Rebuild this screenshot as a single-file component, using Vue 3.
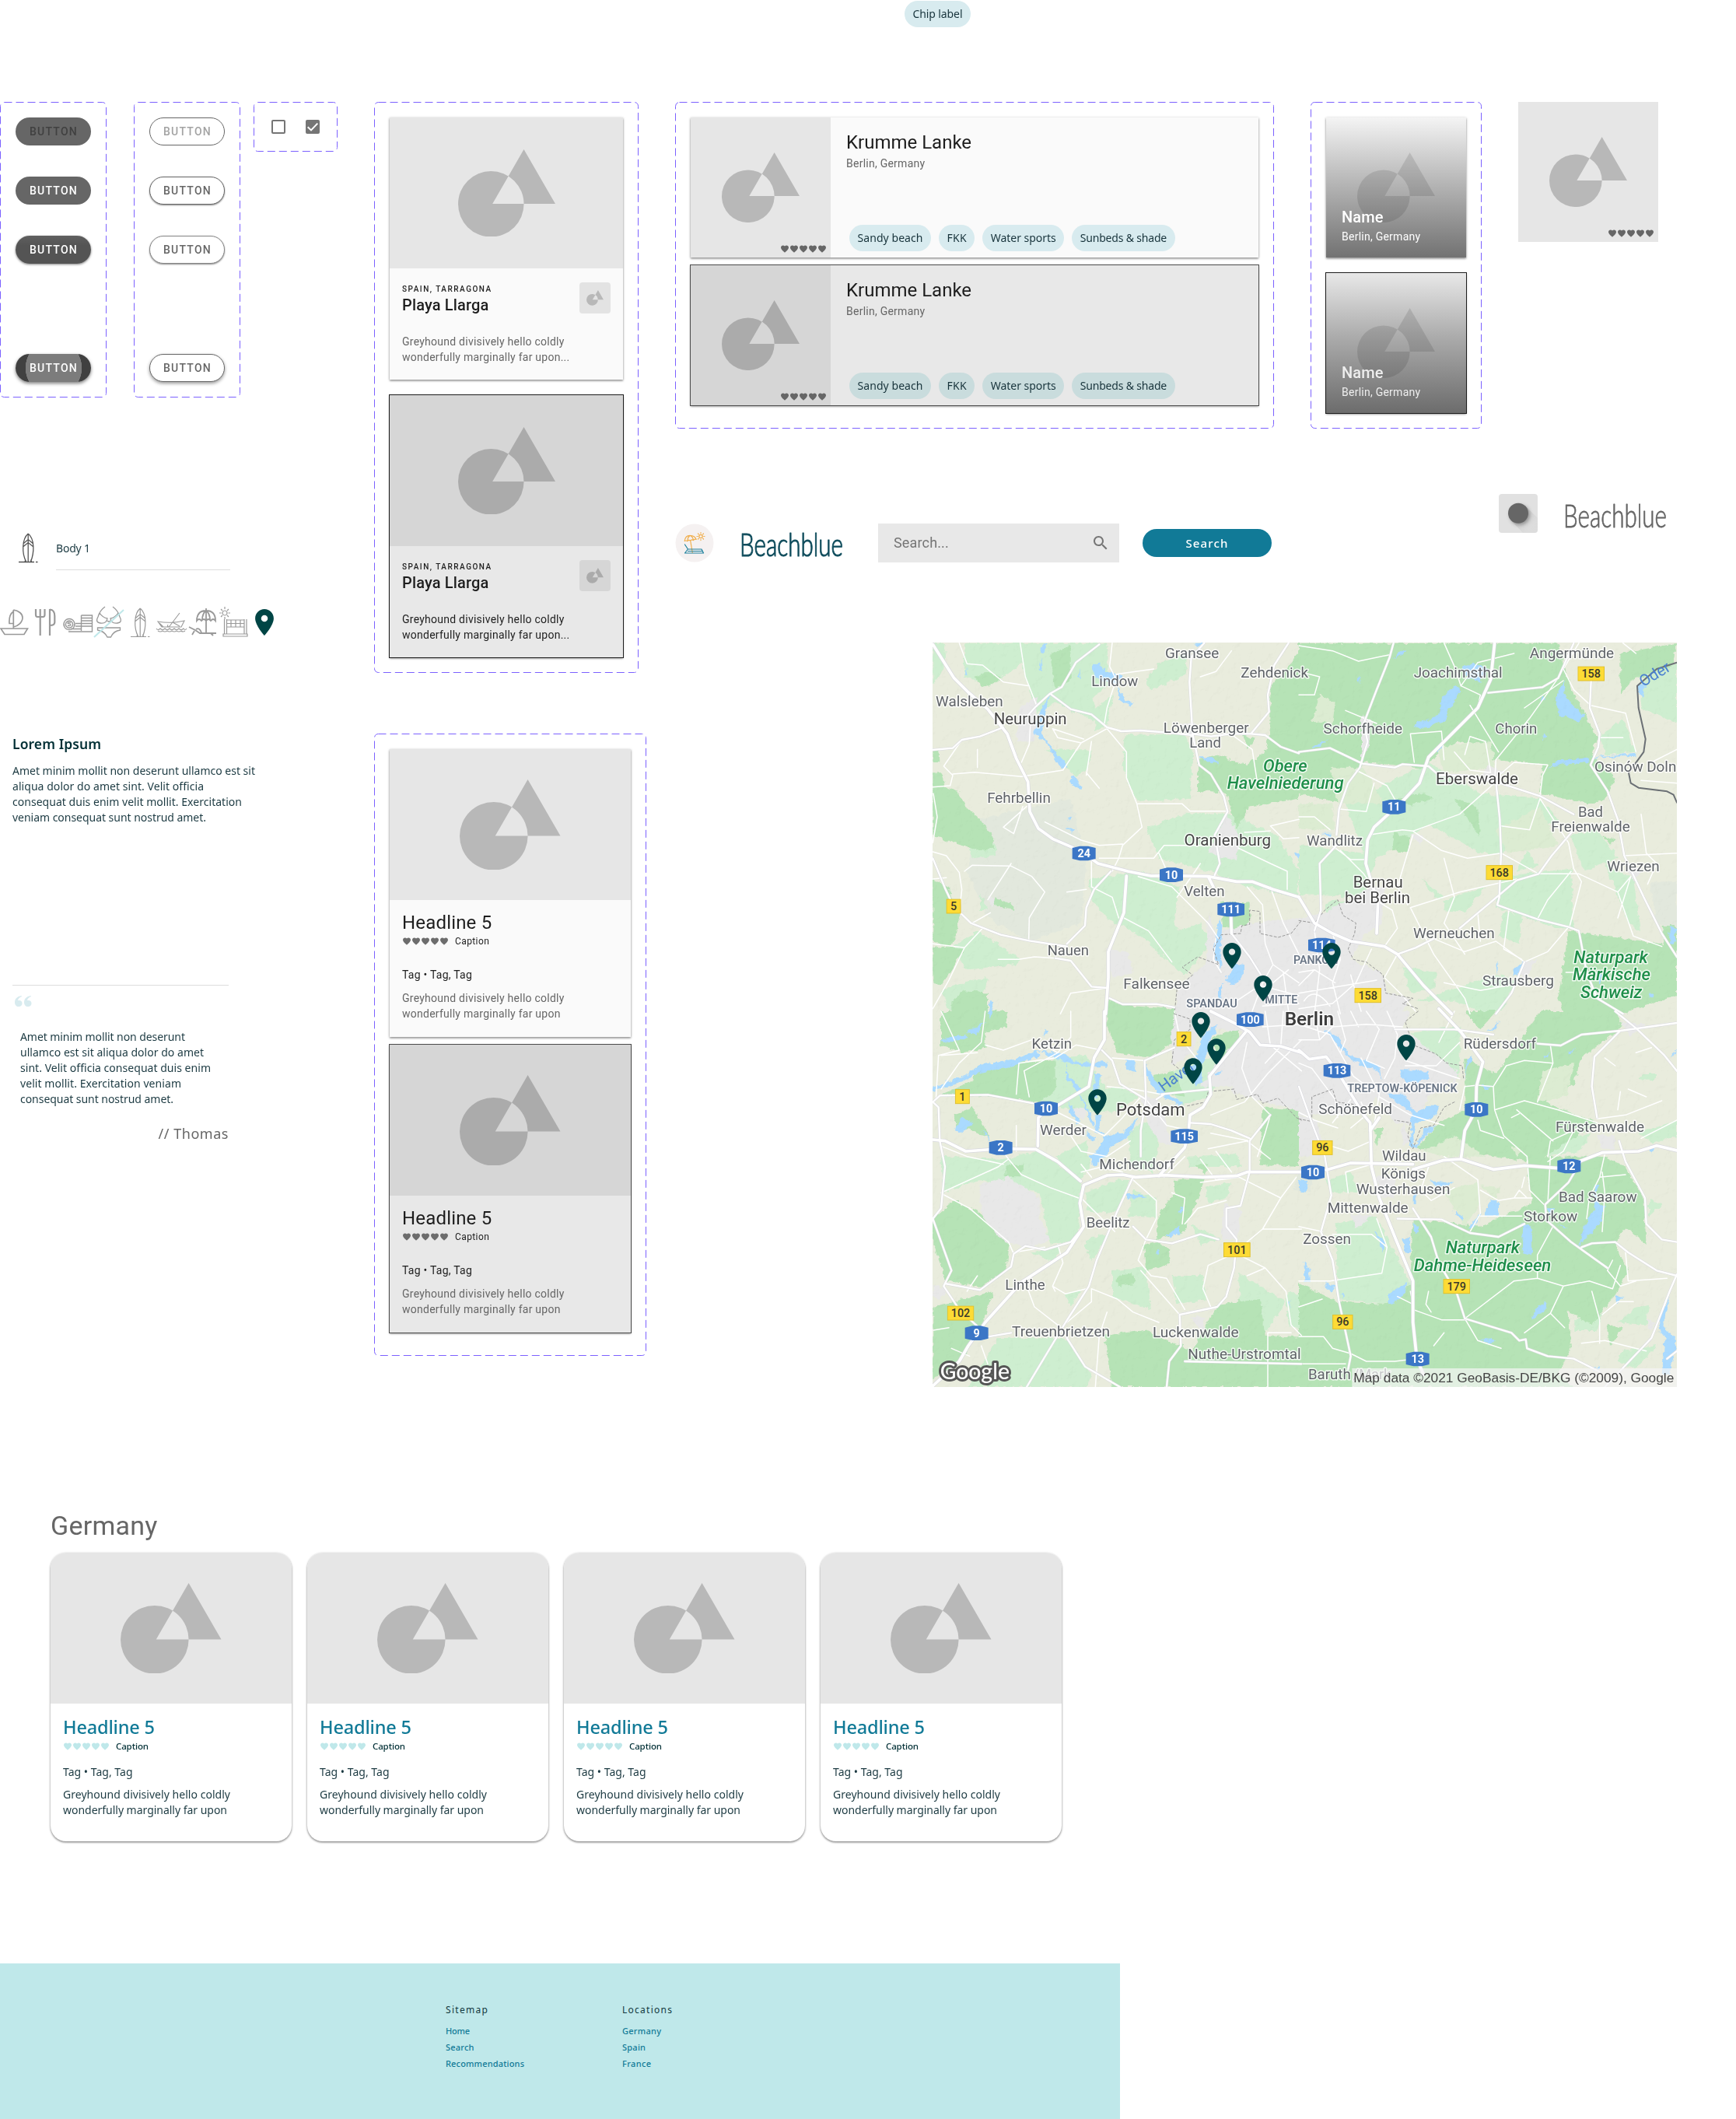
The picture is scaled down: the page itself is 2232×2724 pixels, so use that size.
<script setup>
import { h } from 'vue'

/* Spreads a single line of text over a given width through its tracking. */
const vFit = {
  mounted(el, { value }) {
    const natural = el.getBoundingClientRect().width
    el.style.letterSpacing = ((value - natural) / (el.textContent.length - 1)).toFixed(3) + 'px'
  },
}

const Shapes = () =>
  h('svg', { viewBox: '0 0 125.4 113', 'aria-hidden': 'true' }, [
    h('path', {
      'fill-rule': 'evenodd',
      d: 'M42.4 28.1a42.4 42.4 0 1 1 0 84.8a42.4 42.4 0 1 1 0-84.8zM84.8 0L125.4 70.3H44.3z',
    }),
  ])

const heart = 'M12 21.35l-1.45-1.32C5.4 15.36 2 12.28 2 8.5 2 5.42 4.42 3 7.5 3c1.74 0 3.41.81 4.5 2.09C13.09 3.81 14.76 3 16.5 3 19.58 3 22 5.42 22 8.5c0 3.78-3.4 6.86-8.55 11.54L12 21.35z'
const Hearts = () =>
  h('span', { class: 'hearts' }, [1, 2, 3, 4, 5].map(() => h('svg', { viewBox: '0 0 24 24' }, [h('path', { d: heart })])))

const Frame = () =>
  h('svg', { class: 'dash' }, [h('rect', { x: '.5', y: '.5', rx: 5, class: 'dash-line' })])

const pin = 'M12 2C8.13 2 5 5.13 5 9c0 5.25 7 13 7 13s7-7.75 7-13c0-3.87-3.13-7-7-7zm0 9.5a2.5 2.5 0 1 1 0-5 2.5 2.5 0 0 1 0 5z'

const solid = ['off', '', 'hover', 'pressed']
const outline = ['off', 'low', 'low light', 'high']
const chips = [['Sandy beach', 84], ['FKK', 25], ['Water sports', 84], ['Sunbeds & shade', 111.5]]
const lorem = [
  ['Amet minim mollit non deserunt ullamco est sit', 312],
  ['aliqua dolor do amet sint. Velit officia', 246],
  ['consequat duis enim velit mollit. Exercitation', 295],
  ['veniam consequat sunt nostrud amet.', 249],
]
const quote = [
  ['Amet minim mollit non deserunt', 212],
  ['ullamco est sit aliqua dolor do amet', 236],
  ['sint. Velit officia consequat duis enim', 245],
  ['velit mollit. Exercitation veniam', 207],
  ['consequat sunt nostrud amet.', 197],
]
const footer = [
  { title: ['Sitemap', 54], links: [['Home', 31], ['Search', 36.5], ['Recommendations', 101]] },
  { title: ['Locations', 64], links: [['Germany', 50], ['Spain', 30], ['France', 37]] },
]

const surf = 'M12.2 2C4 9 4 27 9.5 38M12.2 2C21 9 20 27 15.5 38M12.2 2V38M5.8 15L12.2 9.5 18.8 15M5.5 19L12.2 13.5 19 19M0 38.5H20M22 38.5H24.5M9 35.5L8 38M15.5 35.5L16.5 38'
const icons = [
  { w: 36, gap: 9, s: 1.7, d: 'M1 28H35.5L31 35.5H6Z M17.3 4V28M17.3 4C24 5 29 9 29 14C29 20 23 25 17.3 26M17.3 6C13 9 11.5 15 12 21.5H17.3' },
  { w: 26, gap: 11, s: 2.2, d: 'M1 3V10Q1 13 3 13H10.5Q12.5 13 12.5 10V3M6.7 3V37M19 3V37M19 3.5Q25.3 4 25.3 12V20Q25.3 24 19 24' },
  { w: 37, gap: 2, s: 1.4, d: 'M7 15.5a7 7 0 1 0 .01 0M7 18a4.6 4.6 0 1 0 .01 0M9 20.5Q5 19 5.2 21.4Q9 22 8.8 23.5Q8 25.3 5 24M22.5 11H36.5V32H6M22.5 11V31M22.5 14.5H36.5M22.5 18H36.5M22.5 21.5H36.5M22.5 25H36.5M22.5 28.5H9M15 21.5H22.5M15 25H22.5' },
  { w: 39, gap: 8, s: 1.3, d: 'M14 0Q7 5 5 13Q1 20 8 21Q16 22 17 15Q11 14 7 8M17 18Q19 20 21 18M24 0Q31 5 33 13Q37 20 30 21Q22 22 21 15Q27 14 31 8M4.5 27H33.5V30Q25 31 21.5 39H17Q13 31 4.5 30Z', slash: 'M0 39L38 4' },
  { w: 25, gap: 8, s: 1.2, d: surf },
  { w: 39, gap: 3, s: 1.1, d: 'M2 19Q19 22 36 18L32 26H7ZM4 21L9 26M30 8L17 25M17 25Q13 27 15 23M21 20L30 25M0 28Q2 31 5 28Q8 31 11 28Q14 31 17 28Q20 31 23 28Q26 31 29 28Q32 31 35 28Q37 31 39 28M2 31Q5 33 8 31Q11 33 14 31Q17 33 20 31Q23 33 26 31Q29 33 32 31Q34 33 37 31' },
  { w: 35, gap: 4, s: 1.8, d: 'M10 18C10 9 15 5 22 5C29 5 34 9 34 18Q31 14 28 18Q25 14 22 18Q19 14 16 18Q13 14 10 18ZM22 2V34M17 17Q17 9 22 5Q27 9 27 17M0 26L8 30L14 34H35M7 31L4 36M28 34L31 37M9 29Q13 26 16 33' },
  { w: 36, gap: 10, s: 1.2, d: 'M7 5a3 3 0 1 0 .01 0M7 0V3M7 13V16M0 8H2.5M11.5 8H14M2 3L4 5M12 3L10 5M2 13L4 11M12 13L10 11M6.5 16V35M9.5 16V35M32 16V35M35 16V35M9.5 17H32M9.5 26H32M9.5 21.5H32M15 17V26M21 17V26M27 17V26M5 35H36V38H5Z' },
]

/* Regional map, split in four tiles of 1440 units; three units make one pixel. */
const tiles = ['translate(0 0)', 'translate(1440 0)', 'translate(0 1440)', 'translate(1440 1440)']
const land = {
  light: [
    'M150 20L700 20 710 180 640 230 690 340 500 250 430 290 370 100 250 180 150 150ZM770 375L1000 370 1030 440 1020 620 815 630 760 500ZM850 730L1000 680 1180 680 1350 760 1440 900 1430 1000 1240 960 1100 900 900 850ZM630 930L830 900 980 960 960 1100 1000 1170 880 1180 700 1080 640 1010ZM110 1190L200 1130 370 1240 350 1260 150 1280ZM28 20L80 20 70 120 28 180ZM900 100L1000 60 1010 140 870 200 850 160ZM450 430L640 430 630 500 580 540 500 440ZM160 800L270 790 270 840 180 850ZM660 270L720 220 700 340 650 360ZM210 980L240 1050 210 1050ZM860 1180L1060 1100 1100 1180 1000 1300ZM150 1330L240 1310 230 1360 90 1440 60 1360Z',
    'M180 640L500 480 700 600 930 620 1000 700 780 830 700 830 500 720 300 850 250 1000 0 990 0 800 250 830ZM780 920L1050 890 1060 1120 1000 1120 760 1040ZM1180 870L1290 930 1320 1130 1270 1100ZM450 1400L760 1300 840 1320 780 1440 700 1440 600 1400ZM1160 380L1250 310 1300 440 1180 450ZM1330 130L1458 100 1458 330 1320 270ZM1050 760L1150 740 1230 850 1100 900ZM100 1020L200 1010 180 1100 110 1090ZM400 1270L530 1290 520 1350 430 1370ZM560 1010L720 960 640 1060 560 1050ZM470 930L560 1000 540 1010ZM790 1060L860 1070 850 1180 770 1150ZM880 820L920 880 840 900Z',
    'M60 560L300 570 430 540 600 650 590 880 480 900 440 700 200 650 70 700ZM620 700L740 650 790 650 730 780 620 770ZM780 480L830 430 910 430 880 620 790 600ZM720 1000L850 990 870 1150 720 1100ZM950 1020H1070L1080 1110 970 1130ZM1210 1010L1390 1120 1310 1240 1210 1130ZM280 1260L540 1260 640 1400 620 1449 160 1449ZM430 350L500 180 620 170 700 300 760 290 820 330 740 390 560 380ZM900 250L1100 180 1200 100 1100 330 990 360ZM500 560L620 500 640 600 600 650ZM1080 680L1180 660 1160 720 1090 740ZM800 690L890 720 890 800 780 790ZM640 870L710 860 640 960 610 900ZM400 930L520 900 500 970ZM540 1090L600 1070 560 1140ZM1020 820L1140 880 1060 900ZM1010 560L1200 550 1220 600 1020 600ZM1390 1090L1470 1090 1470 1240 1400 1210Z',
    'M430 80L620 60 620 250 540 260ZM140 820L300 790 430 1050 330 1130 150 1110ZM0 100L60 120 50 180 0 190ZM1330 240L1380 240 1370 270 1310 260ZM1310 470L1458 420 1458 480 1370 510ZM100 650L200 620 230 700 130 700ZM1060 1190L1170 1170 1150 1230 1060 1230ZM1290 1150L1350 1130 1340 1210 1230 1200ZM1250 1310L1380 1290 1300 1380 1230 1350ZM1000 500L1130 470 1080 540 960 560ZM1350 720L1400 750 1350 790Z',
  ],
  green: [
    'M28 435L50 435 52 480 28 480ZM28 520L60 520 75 575 130 600 155 650 200 690 265 770 260 815 200 820 28 765ZM28 930L90 960 100 1045 135 1050 115 1150 90 1195 28 1170ZM28 1190L150 1200 90 1300 60 1340 28 1330ZM100 1400L150 1360 240 1370 240 1440 100 1440ZM1330 190L1440 60 1440 620 1250 650 1200 740 1160 600 1050 590 1050 470 1120 450 1240 490 1310 440 1330 330ZM1140 1020H1250V1120H1150ZM700 1395L800 1420 960 1430 960 1440 700 1440ZM190 150L240 130 300 160 220 190ZM270 1000L340 1030 340 1050 260 1030ZM1220 370L1270 390 1240 430ZM1150 1280L1210 1230 1180 1310ZM480 60L560 30 560 160 500 200Z',
    'M0 20L1000 20 1050 200 1150 380 1130 450 1220 540 1180 620 1120 640 930 600 940 490 760 470 620 400 560 430 480 500 250 480 170 640 0 600ZM1040 1130L1400 1180 1458 1200 1458 1380 1300 1430 1200 1470 1030 1470 1000 1390ZM370 750L430 770 420 830 360 820ZM310 640L470 600 520 620 400 650ZM1240 60L1458 20 1440 110 1290 160 1240 220ZM600 620L690 650 700 770ZM1400 1110H1458V1200L1410 1190ZM1170 760L1220 780 1200 800Z',
    'M700 0L960 0 960 110 870 180 740 160 700 60ZM60 0L320 0 310 60 230 80 230 140 140 160 60 130ZM200 210L500 190 500 310 440 350 170 320 60 320 180 270ZM28 800L110 730 200 770 320 890 310 1000 220 1060 80 1040 28 900ZM28 1140L260 1080 220 1200 140 1350 28 1420ZM960 650L1080 640 1000 850 890 880 900 780 960 700ZM1300 370L1440 380 1440 600 1290 590ZM690 1250L850 1230 1000 1300 1470 1350 1470 1449 720 1449ZM1130 1130L1290 1110 1310 1250 1470 1260 1470 1350 1020 1320ZM1110 100L1210 60 1220 180 1130 240ZM840 900L900 890 950 920 930 980 850 1000ZM110 400L180 370 250 490 120 440ZM860 250L960 230 1000 330 900 310ZM310 590L380 590 370 640 310 640ZM740 1020L800 1010 810 1050 740 1060ZM1040 590L1090 590 1080 630Z',
    'M450 530L540 430 640 380 640 180 760 240 930 0 1220 0 1250 60 1090 180 1060 280 950 350 1150 430 950 560 1180 560 1260 600 1330 720 1340 900 1260 830 1220 900 1270 1000 1230 1080 1130 1210 1040 1160 1050 1300 1000 1400 1060 1449 0 1449 0 1050 150 1120 330 1130 430 1050 440 800 700 830 900 740 880 580 640 540ZM640 0L760 0 700 70ZM290 450L330 450 300 520ZM1190 1210L1250 1220 1200 1290Z',
  ],
  pale: [
    '', 'M530 420L740 400 760 500 560 520ZM80 220L140 250 130 330 50 320ZM120 500L250 500 330 640 150 640ZM0 640L130 640 140 740 0 740ZM760 740L930 650 1000 800 800 830Z', '',
    'M940 230L1060 200 1030 330 920 350ZM480 540L600 480 720 560 560 560ZM560 690L690 660 700 740 640 830ZM700 670L780 680 760 730ZM820 520L860 540 840 560Z',
  ],
  urban: [
    'M1160 680L1210 760 1200 860 1090 830ZM700 1200L780 1210 800 1290 720 1310ZM1090 1060L1120 1140 1250 1100 1440 1080 1440 1440 960 1440 980 1340 1080 1260ZM360 270L430 230 420 400 350 400ZM240 990L270 1010 250 1040ZM980 330L1040 330 1030 380Z',
    'M0 1080L100 1060 280 960 330 960 320 1100 250 1150 200 1240 320 1290 340 1370 430 1390 400 1440 0 1440ZM240 300L280 320 270 420 240 480ZM430 760L480 760 470 800ZM730 490L790 520 760 560 700 540ZM860 1250L920 1240 860 1330ZM1260 880L1330 890 1290 940Z',
    'M960 0H1470V390L1300 350 1180 310 1190 290 1060 290 1100 230 1230 80 1060 60 1030 160 950 210 950 100ZM830 330L900 340 950 520 900 500 860 440ZM205 670L320 640 440 720 440 800 480 880 420 910 300 890 220 790ZM1150 740L1220 770 1200 880 1140 880ZM28 1060L80 1070 60 1110 28 1100ZM1020 1180L1080 1180 1070 1240ZM560 380L620 370 610 420Z',
    'M0 0H430L400 60 480 130 620 240 500 330 440 440 370 430 300 330 230 400 0 400ZM1150 480H1220V530H1170ZM1240 40L1340 50 1280 100ZM400 430L430 500 400 520ZM0 400L70 420 100 560 0 560ZM300 640L370 640 370 720 320 720ZM1340 1190L1380 1200 1350 1240ZM560 230L620 250 600 280ZM200 780L280 790 220 840Z',
  ],
  water: [
    'M480 215L440 290 415 370 460 395 520 500 555 500 500 440 445 365 460 300ZM640 105L670 95 700 130 760 150 740 180 650 150ZM565 530L608 575 600 590 555 555ZM740 190L770 240 800 250 795 260 755 245ZM1060 460L1110 460 1130 490 1090 480ZM1190 1250L1230 1260 1230 1290 1190 1340 1150 1320 1180 1290ZM1135 1080L1145 1110 1135 1200 1140 1280 1110 1210ZM1150 1330L1140 1390 1125 1400 1130 1350ZM250 1400L262 1420 252 1468 242 1448ZM455 25L470 20 455 60 440 50ZM445 80L450 130 440 120ZM160 110V140L152 140ZM595 120L600 160 590 150ZM545 730L572 740 562 755ZM545 690H565L555 708ZM1425 825H1440V860ZM1040 20H1070L1050 40Z',
    'M610 185L620 210 580 280 560 320 480 350 445 340 460 325 540 300 555 230 580 200ZM1020 165L1030 230 1100 300 1080 325 1000 290 990 230ZM630 110L670 95 730 120 700 170 640 150ZM960 500L1000 475 1120 462 1120 480 1000 490ZM1120 462L1300 443 1300 455 1180 460ZM830 1280L865 1248 850 1290 830 1305ZM760 1260L770 1250 765 1300ZM1430 1115H1455L1450 1175 1428 1185ZM50 420L115 390 80 420ZM1305 180L1338 170 1330 228 1305 210ZM360 75L415 45 400 65ZM225 150L235 155 235 175ZM940 225L950 240 928 250ZM945 365L955 380 942 395ZM90 755L130 755 120 770ZM535 420L560 415 530 440ZM1350 1370L1370 1375 1358 1385ZM1145 1290L1170 1300 1160 1340Z',
    'M28 290L150 250 210 205 330 190 430 150 440 170 340 210 200 240 120 280 28 310ZM430 150L530 165 600 200 700 195 700 215 600 210 500 180ZM540 190L545 240 600 300 590 320 625 390 640 440 690 470 680 480 655 460 640 400 600 330 540 250ZM655 240H675L660 340 640 340ZM655 400L675 400 670 460 655 450ZM770 190L805 185 812 235 775 225ZM850 200L900 290 930 320 990 350 985 365 900 320 850 250ZM1070 90L1125 50 1110 90 1080 170 1060 220 1070 280 1040 290 1020 240ZM820 410L790 480 740 510 720 520 690 560 650 600 632 560 670 530 690 480 760 470ZM140 410L185 430 130 470 110 455ZM550 350L590 410V440L552 380ZM620 465L655 490 645 505ZM770 705H840L845 720 775 718ZM985 755H995L985 780 970 775ZM980 825V855L940 872 932 860ZM1445 650H1470V705ZM160 80L225 38 200 90ZM60 110L150 90 165 105 70 120ZM895 918L905 918 890 940ZM1465 975V1040L1460 1000ZM1405 1110V1140L1400 1130ZM1110 240L1150 228 1120 248ZM215 455L250 490 245 500ZM460 65L470 80 455 100ZM245 0H260L250 25Z',
    'M390 225L500 230 500 260 430 275 400 260ZM340 320L410 320 450 390 500 365 545 365 520 410 450 430 440 490 450 520 490 450 530 440 480 490 450 530 425 520 435 430 430 390ZM100 70L150 100 200 170 310 210 320 270 305 230 200 190ZM725 85L775 35 760 65ZM740 725L775 740 770 790 715 790ZM1140 670H1155L1150 730 1180 760 1160 820 1080 905 1100 830 1140 760ZM865 820L900 830 900 940 860 930ZM345 1090L420 1045 400 1100 345 1130ZM290 850L330 890 325 925ZM440 820L470 830 450 860ZM400 880L430 870V930L410 930ZM20 970L40 990 45 1040 22 1040ZM105 1045L140 1060 130 1085 108 1070ZM0 650L35 665 22 700 0 690ZM500 655L600 662 540 680ZM440 680H452V750H440ZM700 1265L760 1270 740 1282ZM955 1120L945 1160 895 1190 915 1145ZM1220 1095L1252 1105 1225 1130ZM1430 1100L1405 1210 1458 1270 1430 1400H1400L1412 1260 1385 1220 1400 1150ZM650 840L700 775 680 830ZM635 265L650 185 668 178 650 210ZM590 765L640 795 630 805ZM1345 532L1378 528 1362 548ZM1070 140L1040 170 1040 160ZM970 160L950 185 948 175ZM1458 150L1435 185 1440 165ZM955 760H985L970 790ZM1000 820L1035 840 1020 840ZM160 1090H170V1110ZM1130 1380L1165 1365 1155 1385ZM700 285L740 290 720 305Z',
  ],
}
const major = [
  'M28 25L110 155 165 210 240 275 315 370 350 465 395 555 402 670 435 735 490 775 560 805 611 831 665 870 780 900 870 918 948 917 1090 920 1200 940 1260 940 1340 970 1440 1000M775 918L765 1060 705 1210 705 1310 695 1450M1178 1075L1180 1140M1090 920L1110 960',
  'M755 20L740 160 690 270 500 460 465 560 400 630 290 730 265 780 258 870 285 960 305 1020 300 1140M0 1000L60 1100 130 1140 200 1170 330 1190 380 1220 480 1340 590 1450',
  'M690 0L690 110 650 180 630 290 515 360 465 385 435 410 433 520M28 495L75 500 155 540 290 530 425 532 510 580 598 655M1450 620L1300 620 1240 620 1200 635 1070 640 920 632 810 640 760 630 700 633 610 670 595 740 610 830 545 930 370 1045 230 1200 165 1290 130 1350 28 1445M1235 80L1095 250 1100 320 1070 370 1020 400 1015 460 1000 525 900 635M1100 0L1190 45 1250 80 1290 130 1370 135 1450 160',
  'M540 -10L625 80 710 195 685 290 683 380 640 460 625 570 555 575 440 610M0 150L40 185 105 175 147 229 250 400 275 430 280 600 310 720 370 870 440 1040 440 1200 455 1340 480 1400M105 612L200 585 440 590M625 570L750 610 870 595 1000 605 1080 580 1170 545 1310 540 1380 518 1458 537M310 410L275 460',
]
const middle = [
  'M670 25L580 95 525 190 480 215 425 265 385 310M480 215L560 275 640 295 700 345 755 360 830 357 930 365 1030 375M1075 20L1025 75 1018 170 1030 370 1055 490 1100 525 1150 610 1165 670 1115 760 1135 870 1115 915M1400 20L1345 105 1320 220 1325 285 1255 370 1310 375 1370 420 1440 445M28 432L105 425 140 393 210 380 300 345M28 850L75 965 108 1035 175 1100 290 1145 400 1168 545 1190M710 1390L760 1413 890 1412 960 1425M1180 1140L1250 1230 1300 1310M545 1180L615 1110 620 1040 650 970 715 900M500 1235L560 1245 640 1345 700 1350M1030 370L1100 380 1180 370 1255 370',
  'M365 20L350 75 300 200 250 330 265 400 235 500 190 560 155 660 145 760M0 440L120 425 245 485 370 500 400 487 500 495 540 530 640 530 760 555 930 610 1060 680M1060 20L1000 155 940 190 730 212M1127 165L1122 270 1160 370 1155 420 1125 490 1190 590 1230 700 1255 840 1330 1000 1400 1140 1458 1230M760 555L775 700 780 830 773 1000 765 1030 820 1050 920 1085 1040 1115 1080 1130 1110 1290 1150 1390 1250 1450M1060 740L975 840 925 910 840 935 620 1120M380 1220L450 1195 520 1160M145 800L80 870 85 1050 60 1130M870 1250L820 1370 760 1450',
  'M28 350L55 325 240 322 415 355M28 350L50 370 55 500 75 600 60 760 28 800 100 1000 70 1060 130 1150 200 1215M680 150L720 190 750 280 850 340M960 140L845 190 850 340 830 460 830 560M800 640L740 770 660 960 630 1060 540 1200 390 1449M800 830L850 880 950 895 1060 860 1130 880M1215 750L1160 760 1160 830 1200 880 1190 990 1160 1100 1125 1140 980 1170 985 1290 940 1350 930 1449M240 1255L330 1240M545 1260L615 1370 750 1449M1000 1350L1450 1360M1330 400L1250 500 1250 620 1215 750M330 985L210 1075 75 1050M330 985L340 935 385 905 460 920 560 890 610 830M910 320L1100 300M890 340L920 320M1020 430L1100 435 1180 460 1250 490',
  'M920 125L1010 132 1090 90 1240 75 1458 45M1220 0L1300 65 1410 170 1458 230M1240 75L1140 175 1130 290 1150 410M1235 500L1260 580 1335 720 1340 820 1400 880 1458 890M1090 575L1040 660 950 745 955 800M380 800L550 803 660 855 770 870 870 820M960 810L1050 890 1190 990M1090 910L1130 895 1220 890 1270 930 1380 1000 1458 1020M440 760L510 870 540 970 610 1090 640 1185 820 1240 850 1270 875 1265 880 1300 960 1330 1060 1340 1160 1390M1458 1015L1430 1080 1380 1210 1360 1260 1180 1449M0 290L50 430 100 560 125 710 85 850 130 960 155 1120 200 1330 190 1380M370 70H600L750 90M1420 1340L1458 1310',
]
const minor = [
  'M105 525L190 518 370 535 530 510 600 405 700 350M140 393L70 495 105 530 95 570 28 575M700 350L775 440 775 540 815 640 835 730 760 800 745 850 720 900M670 850L880 850 920 800 1080 800M815 640L990 640 1020 668 1165 668M150 900L180 877 330 880 410 920 460 980 400 1080 398 1165M390 650L300 730 340 755 375 650M28 825L80 840 130 905 140 970 130 1060M365 20L385 150 430 265M28 1180L150 1195 220 1120M150 1195L90 1320 28 1430M130 20L160 100 220 105 300 170 400 185M370 480L400 410 405 320M490 350L510 385 600 405M460 710L600 780 670 800 760 795M720 20L710 110 735 160 700 270 690 330M735 140L880 120M1060 150L1120 130 1180 50M1190 380L1260 430 1280 560M30 600L45 690 28 790M640 850L640 960 720 1000 745 1080M765 1080L860 1130 950 1250M820 920L950 960 1000 1010 1090 1100 1130 1160M1440 700L1330 725 1380 775 1440 770M1205 810L1330 870 1395 900 1395 970M1240 960L1300 1030 1310 1180M1230 750L1330 745M250 1060L180 1100M700 1350L560 1370 520 1450M280 1240L360 1240 420 1230 500 1235M970 1000L1040 900 1060 870M1330 960L1380 1100 1440 1220M900 830L940 920M28 930L80 925M1310 1180L1340 1260 1300 1330 1260 1440M1290 1340L1440 1380M1340 1260L1440 1330M620 520L670 580M490 350L610 390M640 400L620 530M1120 1160L1110 1240 1140 1290M240 1010L330 870M200 430V500M545 980L620 970M1380 1290L1400 1440M1300 1420L1440 1410M1200 1400L1290 1340M1400 1280L1340 1330',
  'M625 185L600 110 560 20M625 185L700 220 690 270M625 185L690 95 830 60M780 725L890 740 930 620M930 620L1040 790 1060 890 1090 940 1045 1110M925 910L1080 910 1230 980 1290 1150 1400 1190M1230 980L1280 920M440 745L550 820 650 850 780 830 925 910M440 745L400 740 270 760M440 760L380 960 420 1030M430 1040L620 980 840 930M430 1040L520 1220 640 1390 660 1450M1000 155L890 310 760 470 755 555M0 30L130 50 230 90 350 65M560 470L550 360 430 370 445 480M600 440L660 510 740 520 720 400 660 380 640 450M1080 20L1020 120 1060 200 1125 260 1260 290 1300 440M1160 385H1250M760 555L620 680 440 745M930 610L940 530 960 490 830 480 760 540M0 690L60 690 120 740M160 820L250 910 300 980M330 1190L380 1120 360 1050 310 1020M520 1160L640 1210 760 1170 870 1250M1110 1290L1030 1290M1040 1115L960 1210 870 1250M1280 920L1230 1080M1255 840L1458 830M1320 680L1340 830 1380 870 1345 950M155 660L260 670 290 560M265 855L200 855 140 810M280 1200L220 1330 130 1410 0 1430M130 1140L160 1240 130 1330 160 1450M0 1370L300 1320M60 1280L0 1340M60 1130L80 1280 60 1450M380 1220L330 1310 400 1380 450 1440M1300 60L1250 20M690 1060L700 1170M1458 560L1320 550M1020 165L870 270M810 1050L790 1200 860 1240M1458 430L1360 480M220 510L340 570 380 640M0 130L80 150 60 220 0 220M180 280L300 330M560 850L600 1000 560 1100 640 1220M770 440L660 260M560 1330L700 1360 860 1330M1050 900L960 1010 920 1085M0 1290L60 1280 140 1330M20 1400Q60 1340 120 1420M200 1300L240 1440',
  'M60 700L280 600 320 570 290 530M320 570L370 630 480 680 590 720M600 720L730 850M850 880L820 960 870 1020 930 1030 1000 1150M640 1070L740 1110 800 1160 900 1200M1210 940L1310 990 1390 1080 1410 1210 1450 1250M1060 660L1210 640 1370 720 1300 840 1240 890M1300 840H1450M230 130L300 150 410 110M60 0L130 150 50 170 40 340M350 320L360 200 500 180 580 130 680 150M170 760L320 890 340 935M65 705L170 760M560 0L560 100 510 160 440 120M510 160L380 230 400 330M510 390L690 480M560 480L600 540 700 560 790 500M690 480L760 410 830 330M600 620L680 600 760 620M850 340L930 440 1020 460M1000 560L920 640M1090 530L1240 500 1330 570M1120 540L1180 620M910 320L800 300 700 290M1240 620L1120 650 1060 570M1370 720L1430 640M545 1200L640 1120 640 1070M500 1080L490 1060 530 970 510 900M490 1060L540 1090 620 1070M340 930L460 910M390 1060L420 1140 510 1210M200 1020L160 1080M700 1160L670 1250 655 1449M1320 1240V1449M1320 1240H1410M1310 990L1240 1020M1250 500L1100 470M840 190L720 180M60 520L160 560 300 590M350 540V440M640 640L600 590M960 0L980 100 1060 200M1330 400L1310 470 1280 560M1000 820L1050 760 1160 730M990 820L1000 720 950 700M850 880L890 800 890 730 800 650M230 0L215 120 130 200 60 300M1450 110L1320 240 1230 350 1100 400M1240 120L1220 220 1260 330 1330 400M1310 0L1330 130 1450 230M215 1290L240 1360M100 1300L170 1330M30 1230L90 1220M980 1170L830 1000M1100 1140L1070 1070 1090 980 1200 930M60 170L200 160M1300 60L1450 50M1380 0L1370 135 1310 200',
  'M750 290L755 380 790 480 880 560 890 690 945 745M755 380L870 345 1000 380 1150 430M980 200L870 190 800 210 750 290 690 285M980 200L920 350M970 130L980 200M1150 415L1260 400 1400 345M960 560L970 500 1100 440M970 560L960 740M640 1185L830 1040 920 1030 1020 1060 970 1165 870 1240M920 1030L920 940 980 830M970 1165L1025 1220M440 1150L550 1190 640 1190M0 1140L90 1110M0 1040L120 1040 320 1010 340 910 300 800M0 1255L95 1255 130 1300 200 1320 260 1350 370 1350 450 1340M0 1360L180 1360M540 120L600 0M410 190L620 260M410 210L530 210 620 120M690 420L700 460 790 490M150 410L140 340 50 220 0 200M560 560L690 650 700 780 660 850M700 690L770 730 830 720 850 690 880 720M700 790H860M900 720H830M1160 640L1260 630M1170 620L1180 700 1170 850M1180 550L1160 640 1120 720 1110 800M1020 1060L1120 1040 1210 1070 1240 980M1210 960L1190 1000 1240 1060 1300 1040M1130 1080L1160 1190 1160 1280M1170 1170L1230 1120 1290 1120M1090 1280L1180 1270 1340 1310M1260 930L1270 1040 1420 1030M0 390L60 420 150 450M200 340L130 430M240 350L260 400 200 450M290 440L310 320 240 180M0 50L120 90 210 250 290 310M150 0L180 110 160 160M260 0L310 70 260 190 330 220M340 0L380 90 370 180 330 260M0 110H80L130 60 260 50 400 60M310 330L430 400 560 440M640 290L690 285M620 380L640 290M500 600L470 690 510 730 600 680M60 500L190 540 280 500M280 590L180 620 190 700M90 850L0 830M130 860L280 860 340 910M640 1185L690 1270 780 1300M500 1080L490 1130 510 1160M520 1290L560 1240M870 640L860 680M1060 460L1020 540 960 580M1320 490L1458 420M820 410L850 395M1180 180L1220 210M1300 160L1360 140M1240 310L1230 380M1270 300L1340 330M430 1080L440 1130 380 1100M840 380L980 500M60 0L80 110M200 0L230 60',
]
const borders = [
  'M960 1450L970 1350 1030 1300 990 1270 1050 1230 1130 1260 1110 1200 1140 1145 1215 1140 1220 1110 1250 1105 1250 1050 1290 1055 1290 1140 1360 1155 1410 1140 1450 1090',
  'M0 1090L60 1100 100 1050 150 1010 170 1070 220 1100 215 1140 190 1200 210 1240 260 1250 325 1300 335 1370 440 1390 400 1410 460 1430',
  'M960 10L1020 30 1020 70 960 110 950 200 1000 240M1010 365L1080 350 1090 310 1190 300 1200 340 1280 320 1300 355 1360 335 1430 410 1450 420',
  'M460 0L410 40 440 130 530 165 570 200 630 210 635 260M600 350L560 370 520 440 470 450 440 530 420 480 430 430 370 420M0 415L50 425 50 330 130 300 145 350 220 360',
]
const labels = [
  [
    ['Gransee', 1028, 77, 208], ['Lindow', 730, 186, 180], ['Walsleben', 169, 263, 260], ['Neuruppin', 404, 334, 282, 'city'], ['Löwenberger', 1082, 366, 330], ['Land', 1079, 424, 122],
    ['Zehdenick', 1346, 152, 260], ['Obere', 1387, 516, 170, 'park'], ['Havelniederung', 1388, 583, 450, 'park'], ['Fehrbellin', 360, 635, 245], ['Oranienburg', 1165, 802, 335, 'city'],
    ['Velten', 1075, 997, 157], ['Nauen', 550, 1225, 160], ['Falkensee', 891, 1352, 256], ['SPANDAU', 1104, 1424, 196, 'quarter'], ['MITTE', 1372, 1409, 126, 'quarter'], ['PANKOW', 1507, 1258, 176, 'quarter'],
  ],
  [
    ['Joachimsthal', 614, 154, 342], ['Angermünde', 1053, 78, 325], ['Schorfheide', 247, 368, 305], ['Chorin', 838, 368, 162], ['Osinów Doln', 1298, 517, 316], ['Eberswalde', 687, 564, 318, 'city'],
    ['Bad', 1125, 690, 96], ['Freienwalde', 1125, 746, 304], ['Wandlitz', 138, 801, 216], ['Wriezen', 1290, 900, 202], ['Bernau', 305, 963, 192, 'city'], ['bei Berlin', 303, 1024, 252, 'city'],
    ['Werneuchen', 598, 1158, 314], ['Strausberg', 846, 1342, 276], ['Naturpark', 1203, 1253, 286, 'park'], ['Märkische', 1206, 1321, 300, 'park'], ['Schweiz', 1205, 1388, 238, 'park'],
  ],
  [
    ['Berlin', 1480, 55, 190, 'capital'], ['Ketzin', 487, 144, 155], ['Potsdam', 868, 403, 266, 'city big'], ['Werder', 531, 476, 180], ['Michendorf', 815, 610, 290], ['Beelitz', 704, 835, 168], ['Linthe', 384, 1075, 154],
    ['Treuenbrietzen', 522, 1254, 378], ['Luckenwalde', 1042, 1256, 332], ['Nuthe-Urstromtal', 1230, 1342, 436],
  ],
  [
    ['Rüdersdorf', 775, 144, 280], ['TREPTOW-KÖPENICK', 399, 312, 424, 'quarter'], ['Schönefeld', 218, 397, 284], ['Fürstenwalde', 1161, 466, 342], ['Wildau', 406, 575, 170], ['Königs', 403, 646, 172],
    ['Wusterhausen', 402, 704, 362], ['Mittenwalde', 266, 778, 312], ['Bad Saarow', 1153, 734, 302], ['Storkow', 971, 811, 208], ['Zossen', 108, 897, 185], ['Naturpark', 709, 933, 286, 'park'],
    ['Dahme-Heideseen', 708, 1001, 530, 'park'], ['Baruth', 118, 1418, 164], ['/Mark', 282, 1418, 146],
  ],
]
const autobahn = [
  [['24', 611, 831], ['10', 948, 914], ['111', 1178, 1047]],
  [['11', 367, 652], ['114', 88, 1185]],
  [['100', 1252, 32], ['10', 465, 375], ['2', 290, 526], ['115', 998, 482], ['9', 197, 1241]],
  [['113', 147, 229], ['10', 685, 379], ['12', 1042, 597], ['10', 54, 621], ['13', 458, 1341]],
]
const federal = [
  [['5', 108, 1035]],
  [['158', 1127, 138], ['168', 773, 905], ['158', 266, 1379]],
  [['1', 142, 329], ['2', 996, 107], ['101', 1201, 920], ['102', 135, 1164]],
  [['96', 91, 526], ['96', 169, 1198], ['179', 608, 1061]],
]
const pins = [
  [[1182, 1276], [1302, 1402]],
  [[126, 1276]],
  [[1062, 103], [1122, 206], [1032, 281], [663, 401]],
  [[414, 190]],
]
const shieldHalf = (t) => (t.length > 2 ? 52 : 45)
const plateWidth = (t) => [57, 79, 104][t.length - 1]
</script>

<template>
  <main class="canvas">
    <div class="item chip-sample"><span class="chip"><span v-fit="64">Chip label</span></span></div>

    <section class="item board buttons-solid">
      <Frame />
      <button v-for="(s, i) in solid" :key="i" class="btn" :class="s">BUTTON</button>
    </section>

    <section class="item board buttons-outline">
      <Frame />
      <button v-for="(s, i) in outline" :key="i" class="btn line" :class="s">BUTTON</button>
    </section>

    <section class="item board checks">
      <Frame />
      <svg viewBox="0 0 18 18"><rect x="1" y="1" width="16" height="16" rx="1" fill="none" stroke="#757575" stroke-width="2" /></svg>
      <svg viewBox="0 0 18 18"><rect width="18" height="18" rx="2" fill="#757575" /><path d="M2.7 9.2L7 13.4L15.3 4.6" fill="none" stroke="#fff" stroke-width="2" /></svg>
    </section>

    <section class="item board beach-cards">
      <Frame />
      <article v-for="s in ['', 'focus']" :key="s" class="card place" :class="s">
        <div class="media"><Shapes /></div>
        <div class="place-body">
          <div class="place-head">
            <div>
              <p class="over">SPAIN, TARRAGONA</p>
              <h3>Playa Llarga</h3>
            </div>
            <span class="thumb"><Shapes /></span>
          </div>
          <p class="text">Greyhound divisively hello coldly<br />wonderfully marginally far upon...</p>
        </div>
      </article>
    </section>

    <section class="item board rows">
      <Frame />
      <article v-for="s in ['', 'focus']" :key="s" class="card row" :class="s">
        <div class="media square"><Shapes /><Hearts /></div>
        <div class="row-body">
          <h2>Krumme Lanke</h2>
          <p class="sub">Berlin, Germany</p>
          <div class="chips">
            <span v-for="c in chips" :key="c[0]" class="chip"><span v-fit="c[1]">{{ c[0] }}</span></span>
          </div>
        </div>
      </article>
    </section>

    <section class="item board tiles">
      <Frame />
      <article v-for="s in ['', 'focus']" :key="s" class="card tile" :class="s">
        <Shapes />
        <h3>Name</h3>
        <p>Berlin, Germany</p>
      </article>
    </section>

    <div class="item media square rated"><Shapes /><Hearts /></div>

    <div class="item brand-grey">
      <svg class="disc" viewBox="0 0 50 50">
        <defs>
          <linearGradient id="cast" x1="0" y1="0" x2="1" y2="1"><stop offset=".2" stop-color="#b5b5b5" /><stop offset=".75" stop-color="#d9d9d9" /></linearGradient>
          <filter id="soft" x="-50%" y="-50%" width="200%" height="200%"><feGaussianBlur stdDeviation="2" /></filter>
        </defs>
        <rect width="50" height="50" rx="4" fill="#e1e1e1" />
        <path d="M34.3 15.5L50 31V46a4 4 0 0 1-4 4H31L15.7 34Z" fill="url(#cast)" opacity=".55" />
        <circle cx="27" cy="27" r="13" fill="#555" opacity=".5" filter="url(#soft)" />
        <circle cx="25" cy="24.8" r="13" fill="#666" />
      </svg>
      <svg class="word" viewBox="0 0 132 54"><text x="-2" y="43" textLength="133" lengthAdjust="spacingAndGlyphs">Beachblue</text></svg>
    </div>

    <header class="item topbar">
      <svg class="badge" viewBox="0 0 50 50" fill="none" stroke-linecap="round" stroke-linejoin="round">
        <circle cx="25" cy="25" r="24.5" fill="#f5f1f1" />
        <g stroke="#f0ae4c" stroke-width="1.2">
          <path d="M12.2 22.5Q13 15.5 19 15.3Q25.5 15.5 27.2 20.5Q25 19.5 23.5 21.6Q21.5 19.8 19.7 22Q17.5 20.4 15.9 22.7Q14 21.4 12.2 22.5ZM16 22.5Q16 18 19 15.3Q23 17 23.4 21.4M19.7 22L22.3 37.5" />
          <circle cx="33" cy="16.5" r="2.2" />
          <path d="M33 11.5V12.6M33 20.5V21.6M28 16.5H29.2M36.8 16.5H38M29.5 13L30.3 13.8M36.5 13L35.7 13.8M29.5 20L30.3 19.2M36.5 20L35.7 19.2" />
        </g>
        <path d="M12.5 27L16.5 33H34L36.5 38H12.5L16 33.5M16.5 35.5H34.5" stroke="#1a7f9c" stroke-width="1.2" />
      </svg>
      <svg class="word teal" viewBox="0 0 132 54"><text x="-2" y="43" textLength="133" lengthAdjust="spacingAndGlyphs">Beachblue</text></svg>
      <div class="search">
        <span>Search...</span>
        <svg viewBox="0 0 24 24"><path d="M15.5 14h-.79l-.28-.27C15.41 12.59 16 11.11 16 9.5 16 5.91 13.09 3 9.5 3S3 5.91 3 9.5 5.91 16 9.5 16c1.61 0 3.09-.59 4.23-1.57l.27.28v.79l5 4.99L20.49 19l-4.99-5zm-6 0C7.01 14 5 11.99 5 9.5S7.01 5 9.5 5 14 7.01 14 9.5 11.99 14 9.5 14z" /></svg>
      </div>
      <button class="go"><span v-fit="54">Search</span></button>
    </header>

    <div class="item entry">
      <svg viewBox="0 0 25 40"><path :d="surf" fill="none" stroke="#555" stroke-width="1.3" /></svg>
      <div class="entry-text"><span v-fit="44">Body 1</span></div>
    </div>

    <div class="item icons">
      <svg v-for="(ic, i) in icons" :key="i" :viewBox="`0 0 ${ic.w} 40`" :style="{ width: ic.w + 'px', marginRight: ic.gap + 'px' }">
        <path :d="ic.d" :stroke-width="ic.s" />
        <path v-if="ic.slash" class="slash" :d="ic.slash" />
      </svg>
      <svg class="pin" viewBox="5 2 14 20"><path :d="pin" /></svg>
    </div>

    <section class="item lorem">
      <h4><span v-fit="114">Lorem Ipsum</span></h4>
      <p v-for="l in lorem" :key="l[0]"><span v-fit="l[1]">{{ l[0] }}</span></p>
    </section>

    <blockquote class="item quote">
      <svg viewBox="0 0 22 14"><path v-for="x in [0, 12]" :key="x" :transform="`translate(${x})`" d="M8.5 0C3 1 0 4 0 8.5C0 12 2 14 5 14C8 14 9.5 12 9.5 10C9.5 7.5 8 6 5.5 6C4.5 6 4 6.2 3.8 6.3C4.3 4 6 2 9 .9Z" /></svg>
      <div class="quote-lines"><p v-for="l in quote" :key="l[0]"><span v-fit="l[1]">{{ l[0] }}</span></p></div>
      <footer><span v-fit="90">// Thomas</span></footer>
    </blockquote>

    <section class="item board stories">
      <Frame />
      <article v-for="s in ['', 'focus']" :key="s" class="card story" :class="s">
        <div class="media"><Shapes /></div>
        <div class="story-body">
          <h2>Headline 5</h2>
          <div class="rate"><Hearts /><span>Caption</span></div>
          <p class="tags">Tag • Tag, Tag</p>
          <p class="text">Greyhound divisively hello coldly<br />wonderfully marginally far upon</p>
        </div>
      </article>
    </section>

    <svg class="item map" viewBox="27 18 2871 2871">
      <defs>
        <filter id="ragged" x="0" y="0" width="100%" height="100%">
          <feTurbulence type="fractalNoise" baseFrequency=".045" numOctaves="3" seed="4" />
          <feDisplacementMap in="SourceGraphic" scale="22" xChannelSelector="R" yChannelSelector="G" />
        </filter>
        <filter id="relief" x="0" y="0" width="100%" height="100%" color-interpolation-filters="sRGB">
          <feTurbulence type="fractalNoise" baseFrequency=".03" numOctaves="4" seed="9" result="n" />
          <feDiffuseLighting in="n" surfaceScale="2.2" diffuseConstant="1.06" lighting-color="#fff"><feDistantLight azimuth="225" elevation="72" /></feDiffuseLighting>
        </filter>
      </defs>
      <rect x="27" y="18" width="2871" height="2871" fill="#e9ecdd" />
      <g filter="url(#ragged)">
        <rect x="0" y="0" width="2920" height="2920" fill="#e9ecdd" />
        <path class="meadow" d="M200 700L560 620 620 860 600 1100 400 1170 240 1080 160 900ZM2790 940H2898V1110H2820ZM1440 2040L1500 2060 1480 2140 1420 2130Z" />
        <template v-for="(paths, kind) in land" :key="kind">
          <g v-for="(d, i) in paths" :key="i" :transform="tiles[i]"><path :class="kind" :d="d" /></g>
        </template>
      </g>
      <rect class="shade" x="27" y="18" width="2871" height="2871" filter="url(#relief)" />
      <g v-for="(t, i) in tiles" :key="'r' + i" :transform="t">
        <path class="road minor" :d="minor[i]" />
        <path class="border" :d="borders[i]" />
      </g>
      <g v-for="(t, i) in tiles" :key="'c' + i" :transform="t"><path class="case mid" :d="middle[i]" /><path class="case" :d="major[i]" /></g>
      <g v-for="(t, i) in tiles" :key="'m' + i" :transform="t"><path class="road mid" :d="middle[i]" /><path class="road" :d="major[i]" /></g>
      <path class="frontier" d="M2898 95L2820 120 2745 185 2750 270 2777 390 2770 440 2712 520 2720 560 2750 578 2860 592 2885 605 2898 635" />
      <g v-for="(t, i) in tiles" :key="'l' + i" :transform="t">
        <text v-for="l in labels[i]" :key="l[0]" class="label" :class="l[4]" :x="l[1] - l[3] / 2" :y="l[2]" :textLength="l[3]" lengthAdjust="spacingAndGlyphs">{{ l[0] }}</text>
      </g>
      <text class="river" transform="translate(2768 190) rotate(-31)">Oder</text>
      <text class="river" transform="translate(917 1752) rotate(-36)">Havel</text>
      <g v-for="(t, i) in tiles" :key="'s' + i" :transform="t">
        <g v-for="s in autobahn[i]" :key="s[1]" :transform="`translate(${s[1]} ${s[2]})`">
          <path fill="#3b76c6" :d="`M${-shieldHalf(s[0])} -21L-16 -28H16L${shieldHalf(s[0])} -21V21L16 28H-16L${-shieldHalf(s[0])} 21Z`" />
          <text class="num white" y="15">{{ s[0] }}</text>
        </g>
        <g v-for="s in federal[i]" :key="s[1]" :transform="`translate(${s[1]} ${s[2]})`">
          <rect :x="-plateWidth(s[0]) / 2 + 1.5" y="-27" :width="plateWidth(s[0]) - 3" height="54" fill="#fddb35" stroke="#dfbf2c" stroke-width="3" />
          <text class="num" y="15">{{ s[0] }}</text>
        </g>
      </g>
      <g v-for="(t, i) in tiles" :key="'p' + i" :transform="t">
        <path v-for="p in pins[i]" :key="p[0]" fill="#004545" :d="pin" :transform="`translate(${p[0] - 60} ${p[1] - 110}) scale(5)`" />
      </g>
      <text class="google" x="56" y="2858" textLength="268" lengthAdjust="spacingAndGlyphs">Google</text>
      <rect x="1645" y="2817" width="1253" height="72" fill="#f5f5f5" opacity=".7" />
      <text class="credit" x="1651" y="2871" textLength="1236" lengthAdjust="spacingAndGlyphs">Map data ©2021 GeoBasis-DE/BKG (©2009), Google</text>
    </svg>

    <section class="item country">
      <h1>Germany</h1>
      <div class="country-list">
        <article v-for="n in 4" :key="n" class="card trip">
          <div class="media"><Shapes /></div>
          <div class="trip-body">
            <h2><span v-fit="118">Headline 5</span></h2>
            <div class="rate"><Hearts /><span v-fit="42">Caption</span></div>
            <p class="tags"><span v-fit="93">Tag • Tag, Tag</span></p>
            <p><span v-fit="215">Greyhound divisively hello coldly</span></p>
            <p><span v-fit="211">wonderfully marginally far upon</span></p>
          </div>
        </article>
      </div>
    </section>

    <footer class="item sitefoot">
      <nav v-for="c in footer" :key="c.title[0]">
        <h5><span v-fit="c.title[1]">{{ c.title[0] }}</span></h5>
        <a v-for="l in c.links" :key="l[0]"><span v-fit="l[1]">{{ l[0] }}</span></a>
      </nav>
    </footer>
  </main>
</template>

<style>
body { margin: 0; background: #fff; }
.hearts { display: inline-flex; }
.hearts svg { width: 12px; height: 12px; fill: currentColor; display: block; }
.dash { position: absolute; inset: 0; width: 100%; height: 100%; overflow: visible; pointer-events: none; }
.dash-line { width: calc(100% - 1px); height: calc(100% - 1px); fill: none; stroke: #7b61ff; stroke-dasharray: 10 5; }
</style>

<style scoped>
.canvas { position: relative; width: 2232px; height: 2724px; overflow: hidden; background: #fff; font-family: Roboto, "Liberation Sans", sans-serif; color: #1d1d1d; }
.canvas * { box-sizing: border-box; }
h1, h2, h3, h4, h5, p, blockquote { margin: 0; font-weight: 400; }
button { border: 0; padding: 0; margin: 0; font: inherit; }
svg { display: block; }

/* Components laid out freely on the board */
.item { position: absolute; }
.board { display: flex; }

.chip-sample { left: 1163px; top: 1px; }
.chip { display: inline-flex; align-items: center; justify-content: center; height: 34px; padding: 0 10.5px; border-radius: 17px; background: #d8ebef; color: #17333b; font: 14px/20px "Noto Sans", sans-serif; white-space: nowrap; }
.chip span, [class] span { white-space: nowrap; }

.buttons-solid, .buttons-outline { top: 131px; width: 137px; height: 380px; flex-direction: column; align-items: center; padding-top: 20px; gap: 40px; }
.buttons-solid { left: 0; }
.buttons-outline { left: 172px; }
.btn { width: 97px; height: 36px; border-radius: 18px; background: #666; color: #fff; font-weight: 500; font-size: 14px; letter-spacing: 1.25px; text-indent: 1px; text-align: center; flex: none; }
.btn:last-child { margin-top: 76px; }
.btn.off { color: #404040; }
.btn.hover { background: linear-gradient(#606060, #545454 35%); box-shadow: 0 1px 3px rgba(0, 0, 0, .5); }
.btn.pressed { background: radial-gradient(circle at 49px 18px, #7c7c7c 36px, #404040 36.5px); box-shadow: 0 2px 4px rgba(0, 0, 0, .5); }
.btn.line { background: #fff; border: 1px solid #666; color: #666; }
.btn.line.off { color: #a3a3a3; }
.btn.line.low { box-shadow: 0 1px 2px rgba(0, 0, 0, .45); }
.btn.line.light { border-color: #858585; }
.btn.line.high { box-shadow: 0 2px 4px rgba(0, 0, 0, .4); }

.checks { left: 326px; top: 131px; width: 108px; height: 64px; padding: 23px 0 0 23px; gap: 26px; }
.checks > svg:not(.dash) { width: 18px; height: 18px; }

.card { background: #fafafa; box-shadow: 0 1px 3px rgba(0, 0, 0, .4), 0 2px 2px rgba(0, 0, 0, .15); }
.media { position: relative; display: flex; align-items: center; justify-content: center; height: 194px; background: #e6e6e6; }
.media > svg { width: 125px; fill: #b8b8b8; }
.media.square { width: 180px; height: 180px; flex: none; }
.media.square > svg { width: 100px; }
.media .hearts { position: absolute; right: 5px; bottom: 5px; color: #666; }
.focus { background: #e8e8e8; outline: 1px solid #1d1d1d; }
.focus .media { background: #d6d6d6; }
.focus .media > svg, .focus .thumb svg { fill: #ababab; }
.text { font-size: 14px; line-height: 20px; letter-spacing: .25px; color: #666; }

.beach-cards { left: 481px; top: 131px; width: 340px; height: 734px; padding: 20px; flex-direction: column; gap: 20px; }
.place { height: 337px; }
.place-body { padding: 18px 16px 0; }
.place-head { display: flex; justify-content: space-between; }
.over { font-size: 10px; font-weight: 500; line-height: 17px; letter-spacing: 1.5px; }
.place h3 { font-size: 20px; font-weight: 500; line-height: 24px; letter-spacing: .15px; }
.thumb { width: 40px; height: 40px; border-radius: 4px; background: #e3e3e3; display: flex; align-items: center; justify-content: center; }
.thumb svg { width: 22px; fill: #b8b8b8; }
.focus .thumb { background: #d6d6d6; }
.place .text { margin-top: 25px; }
.place.focus .text { color: #1d1d1d; }

.rows { left: 868px; top: 131px; width: 770px; height: 420px; padding: 20px 20px 30px; flex-direction: column; gap: 10px; }
.row { display: flex; height: 180px; }
.row.focus, .story.focus { outline-color: #4c4c4c; }
.row-body { display: flex; flex-direction: column; flex: 1; padding: 16px 20px 8px; }
.row h2 { font-size: 24px; line-height: 32px; }
.sub { margin-top: 1px; font-size: 14px; line-height: 20px; letter-spacing: .25px; color: #666; }
.chips { display: flex; gap: 10px; margin: auto 0 0 4px; }
.focus .chip { background: #c9dcdd; }

.tiles { left: 1685px; top: 131px; width: 220px; height: 420px; padding: 20px; flex-direction: column; gap: 20px; }
.tile { position: relative; display: flex; flex-direction: column; justify-content: flex-end; width: 180px; height: 180px; padding: 0 20px 17px; background: linear-gradient(#f4f4f4, #b8b8b8 45%, #727272); color: #fff; }
.tile > svg { position: absolute; left: 40px; top: 45px; width: 100px; fill: rgba(0, 0, 0, .11); }
.tile h3 { position: relative; font-size: 20px; font-weight: 500; line-height: 24px; letter-spacing: .15px; }
.tile p { position: relative; margin-top: 3px; font-size: 14px; line-height: 20px; letter-spacing: .25px; }
.tile.focus { background: linear-gradient(#e8e8e8, #acacac 45%, #6c6c6c); color: #eee; }

.rated { left: 1952px; top: 131px; }

.brand-grey { left: 1927px; top: 635px; display: flex; }
.disc { width: 50px; height: 50px; margin-right: 35px; }
.word { width: 132px; height: 54px; overflow: visible; }
.word text { font-family: Lato, sans-serif; font-weight: 300; font-size: 41px; fill: #666; stroke: #666; stroke-width: .8px; stroke-linejoin: round; }
.word.teal text { fill: #0f4c5c; stroke: #0f4c5c; stroke-width: 1.1px; }

.topbar { left: 868px; top: 673px; display: flex; align-items: center; height: 50px; }
.badge { width: 50px; height: 50px; margin-right: 35px; }
.topbar .word { margin: 2px 44px 0 0; }
.search { display: flex; align-items: center; justify-content: space-between; width: 310px; height: 50px; padding: 0 12px 0 20px; background: #e8e8e8; color: #757575; font-size: 18px; line-height: 24px; }
.search svg { width: 24px; height: 24px; fill: #757575; }
.search span { letter-spacing: .15px; }
.go { width: 166px; height: 36px; margin-left: 30px; border-radius: 18px; background: #117a97; color: #fff; font: 500 15px/35px "Noto Sans", sans-serif; }

.entry { left: 24px; top: 684px; display: flex; }
.entry > svg { width: 25px; height: 40px; }
.entry-text { width: 224px; height: 49px; margin-left: 23px; padding-top: 11px; border-bottom: 1px solid #ddd; }
.entry-text, .lorem p, .quote p, .trip p { font: 14px/20px "Noto Sans", sans-serif; color: #1c3a42; }

.icons { left: 0; top: 780px; display: flex; align-items: flex-start; }
.icons svg { height: 40px; flex: none; fill: none; stroke: #999; overflow: visible; }
.icons .slash { stroke: #bfe8ea; stroke-width: 2; }
.icons .pin { width: 24px; height: 34px; margin-top: 3px; fill: #004545; stroke: none; }

.lorem { left: 16px; top: 944px; }
.lorem h4 { margin-bottom: 12px; font: 600 17.5px/25px "Noto Sans", sans-serif; color: #002f35; }

.quote { left: 16px; top: 1266px; width: 278px; border-top: 1px solid #ddd; }
.quote svg { width: 22px; height: 14px; margin: 13px 0 0 3px; fill: #d8ebef; }
.quote-lines { margin: 29px 0 0 10px; }
.quote footer { margin-top: 22px; text-align: right; font: 18px/24px "Noto Sans", sans-serif; color: #666; }

.stories { left: 481px; top: 943px; width: 350px; height: 800px; padding: 20px 20px 30px; flex-direction: column; gap: 10px; }
.story { height: 370px; }
.story .media > svg, .trip .media > svg { width: 129.5px; }
.story-body { padding: 15px 16px 0; }
.story h2 { font-size: 24px; line-height: 28px; letter-spacing: .18px; }
.rate { display: flex; align-items: center; gap: 8px; height: 16px; margin-top: 2px; font-size: 12px; letter-spacing: .4px; }
.rate .hearts { color: #6c6c6c; }
.tags { margin-top: 25px; font-size: 14px; line-height: 20px; letter-spacing: .25px; }
.story .text { margin-top: 10px; }

.map { left: 1199px; top: 826px; width: 957px; height: 957px; }
.meadow { fill: #e2e8dd; }
.light { fill: #ceeed0; }
.green { fill: #b6e3b6; }
.map .pale { fill: #dcecd2; }
.urban { fill: #e8e8e8; }
.water { fill: #aadaff; }
.shade { mix-blend-mode: multiply; opacity: .3; }
.road, .case, .border, .frontier { fill: none; stroke-linejoin: round; stroke-linecap: round; }
.road { stroke: #fff; stroke-width: 11; }
.case { stroke: #d8d8de; stroke-width: 15; }
.road.mid { stroke-width: 7; }
.case.mid { stroke-width: 10; }
.road.minor { stroke-width: 4.5; }
.border { stroke: #999; stroke-width: 3; stroke-dasharray: 9 8; }
.frontier { stroke: #6b7075; stroke-width: 6; }
.label { font-size: 57px; fill: #5f6368; stroke: #fff; stroke-width: 9px; stroke-opacity: .8; paint-order: stroke; stroke-linejoin: round; }
.label.city { font-size: 61px; fill: #444; }
.label.big { font-size: 65px; }
.label.capital { font-size: 70px; font-weight: 600; fill: #3c3c3c; }
.label.park { font-size: 65px; font-style: italic; font-weight: 500; fill: #1e8e4a; }
.label.quarter { font-size: 44px; font-weight: 600; fill: #6a7686; }
.river { font-size: 60px; fill: #4a80d0; }
.num { font-size: 43px; font-weight: 500; text-anchor: middle; fill: #3a3a2a; }
.num.white { font-weight: 700; fill: #fff; }
.google { font: 500 86px Lato, sans-serif; fill: #fff; stroke: #555; stroke-width: 18px; paint-order: stroke; stroke-linejoin: round; }
.credit { font: 52px "Liberation Sans", sans-serif; fill: #444; }

.country { left: 65px; top: 1941px; }
.country h1 { font-size: 34px; line-height: 40px; letter-spacing: .25px; color: #666; }
.country-list { display: flex; gap: 20px; margin-top: 15px; }
.trip { width: 310px; height: 371px; border-radius: 20px; overflow: hidden; background: #fff; }
.trip-body { padding: 16px 16px 0; }
.trip h2 { font: 500 23.5px/28px "Noto Sans", sans-serif; color: #117a97; }
.trip .rate { margin-top: 3px; font: 500 11.5px/16px "Noto Sans", sans-serif; color: #002f35; letter-spacing: 0; }
.trip .rate .hearts { color: #bfe8ea; }
.trip .tags { margin: 15px 0 9px; }

.sitefoot { left: 0; top: 2524px; display: flex; width: 1440px; height: 200px; padding: 52px 0 0 573px; background: #bfe8ea; font-family: "Noto Sans", sans-serif; }
.sitefoot nav { width: 227px; }
.sitefoot h5 { margin-bottom: 8px; font-size: 12px; line-height: 16px; color: #12393f; }
.sitefoot a { display: block; font-size: 11px; font-weight: 500; line-height: 21px; color: #117a97; }
</style>
